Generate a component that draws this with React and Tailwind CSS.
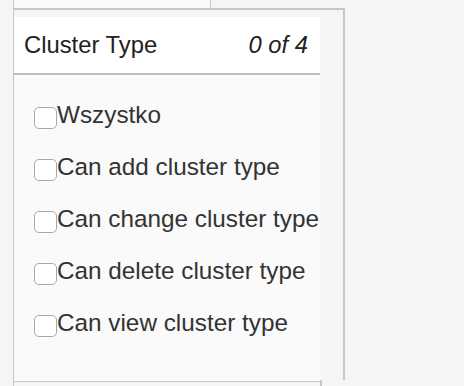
export default function App() {
    const perms = [
        'Wszystko',
        'Can add cluster type',
        'Can change cluster type',
        'Can delete cluster type',
        'Can view cluster type',
    ];

    return (
        <div
            className="w-[464px] h-[386px] overflow-hidden bg-[#f5f5f5] pl-[13px] text-[#333]"
            style={{ fontFamily: '"Liberation Sans", Arial, sans-serif' }}
        >
            {/* previous block edge */}
            <div className="w-[198px] h-[8px] border-l border-r border-[#c6c6c6] bg-[#f9f9f9]"></div>

            {/* filter wrapper */}
            <div className="w-[332px] h-[372px] border-t-2 border-l border-r-2 border-[#c6c6c6] pt-[7px]">
                <div className="w-[306px] h-[364px] flex flex-col">
                    {/* header */}
                    <div className="h-[58px] bg-white border-b-2 border-[#bdbdbd] flex items-center justify-between pl-[10px] pr-[12px]">
                        <span className="text-[23.8px] text-[#222]">Cluster Type</span>
                        <span className="text-[23.8px] italic text-[#222]">0 of 4</span>
                    </div>

                    {/* options */}
                    <ul className="flex-1 bg-[#fafafa] pt-[14px] pl-[20px]">
                        {perms.map(p => (
                            <li key={p} className="h-[52px] flex items-center">
                                <span className="w-[23px] h-[22px] mt-[6px] rounded-[5px] border border-[#a9a9a9] bg-white shrink-0"></span>
                                <span className="text-[24.3px] leading-none whitespace-nowrap">{p}</span>
                            </li>
                        ))}
                    </ul>
                </div>
            </div>

            {/* next block */}
            <div className="w-[309px] h-[20px] border-t-2 border-l border-r-2 border-[#c6c6c6]"></div>
        </div>
    );
}
